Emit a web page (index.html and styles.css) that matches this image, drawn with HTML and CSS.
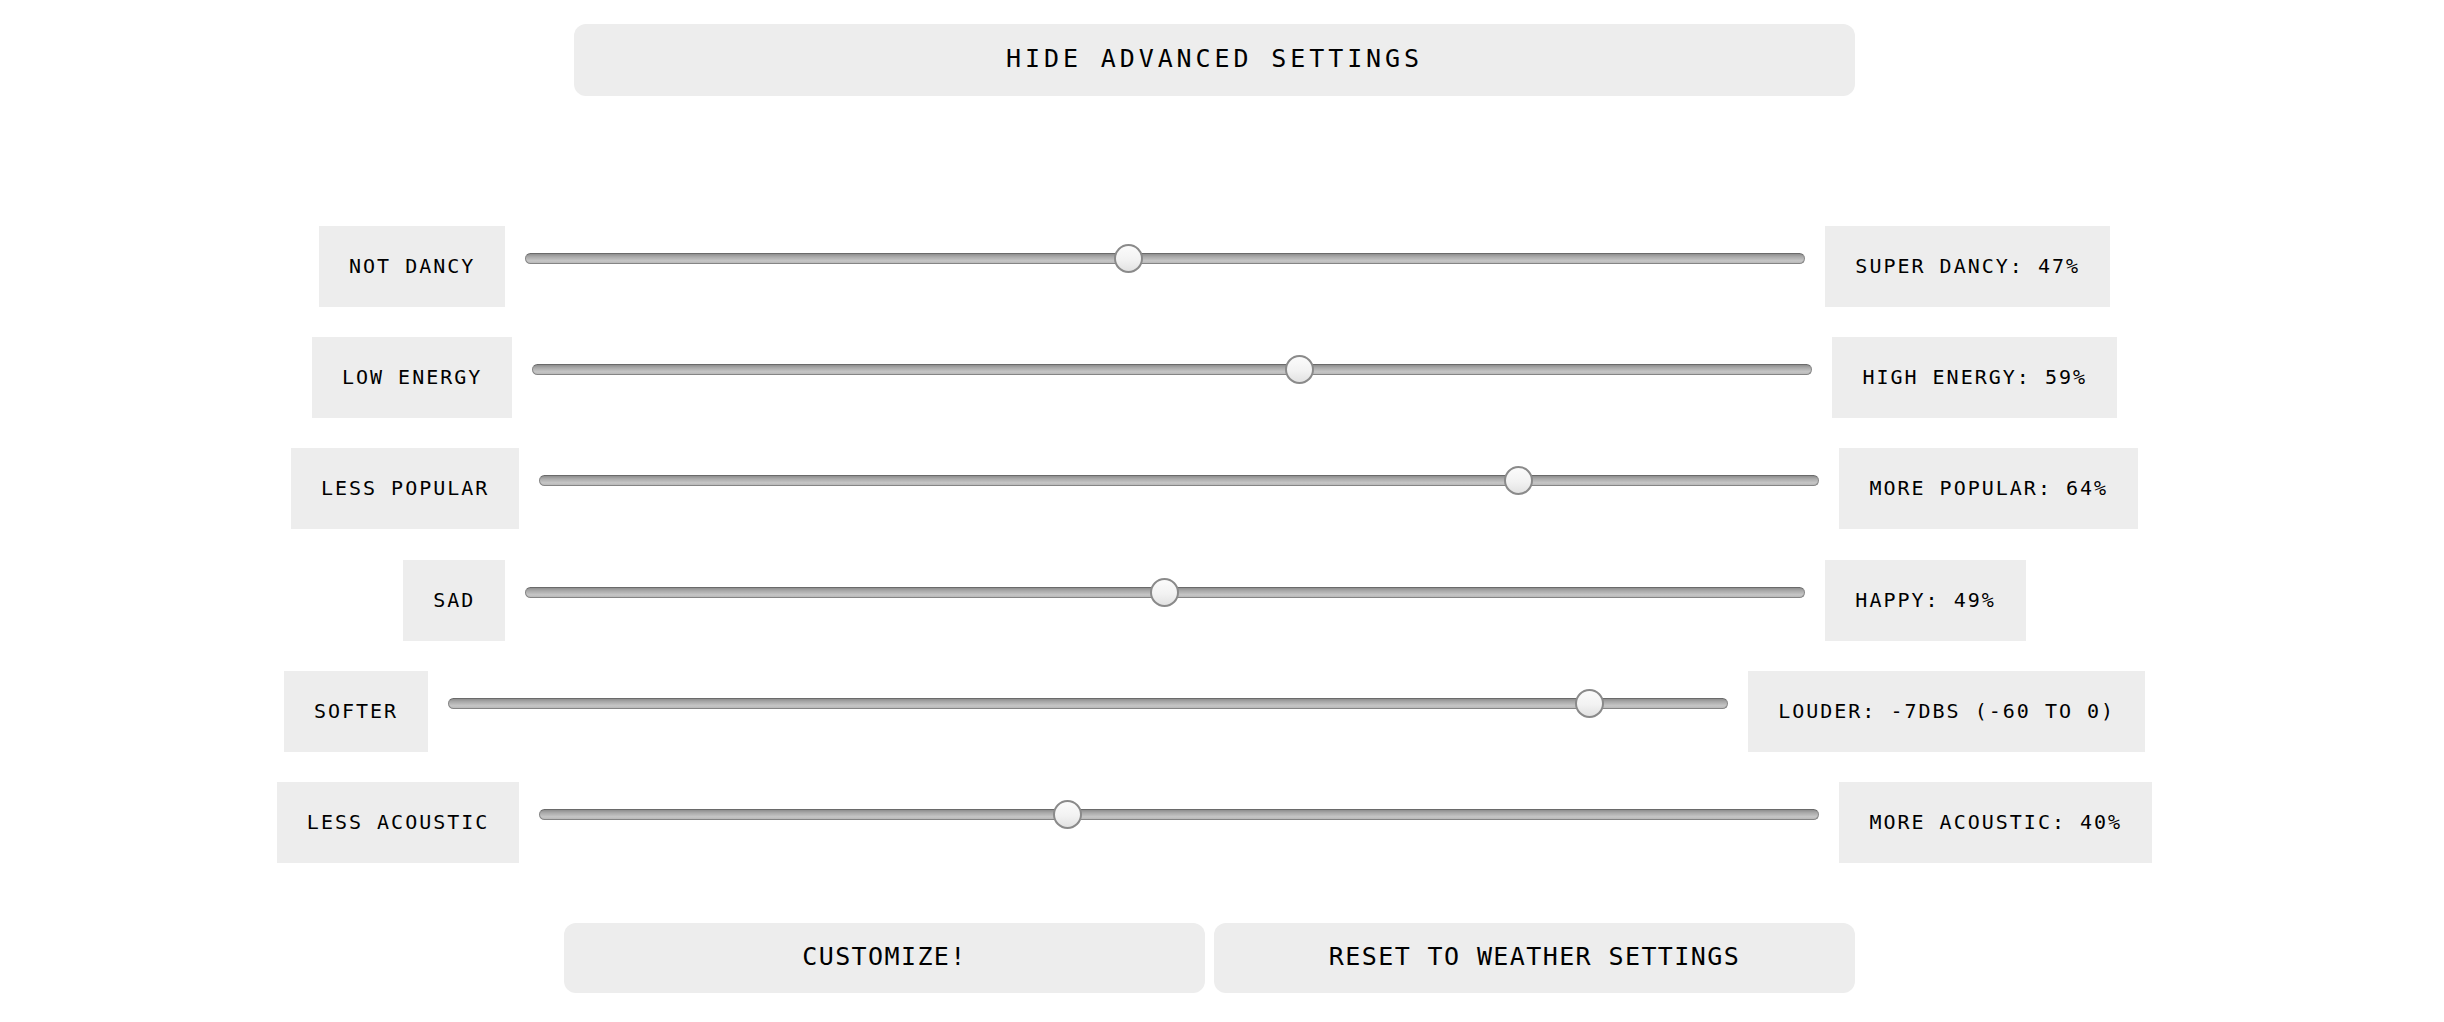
FILE: index.html
```html
<!DOCTYPE html>
<html lang="en">
<head>
<meta charset="utf-8">
<title>Advanced settings</title>
<link rel="stylesheet" href="styles.css">
</head>
<body>
<div class="page">
  <div class="panel">
    <button class="btn btn-toggle" type="button">HIDE ADVANCED SETTINGS</button>

    <div class="rows">
      <div class="row">
        <span class="tag">NOT DANCY</span>
        <input class="slider" type="range" min="0" max="100" step="any" value="47.05">
        <span class="tag">SUPER DANCY: 47%</span>
      </div>
      <div class="row">
        <span class="tag">LOW ENERGY</span>
        <input class="slider" type="range" min="0" max="100" step="any" value="60.15">
        <span class="tag">HIGH ENERGY: 59%</span>
      </div>
      <div class="row">
        <span class="tag">LESS POPULAR</span>
        <input class="slider" type="range" min="0" max="100" step="any" value="77.15">
        <span class="tag">MORE POPULAR: 64%</span>
      </div>
      <div class="row">
        <span class="tag">SAD</span>
        <input class="slider" type="range" min="0" max="100" step="any" value="49.95">
        <span class="tag">HAPPY: 49%</span>
      </div>
      <div class="row">
        <span class="tag">SOFTER</span>
        <input class="slider" type="range" min="-60" max="0" step="any" value="-5.9">
        <span class="tag">LOUDER: -7DBS (-60 TO 0)</span>
      </div>
      <div class="row">
        <span class="tag">LESS ACOUSTIC</span>
        <input class="slider" type="range" min="0" max="100" step="any" value="41.05">
        <span class="tag">MORE ACOUSTIC: 40%</span>
      </div>
    </div>

    <div class="actions">
      <button class="btn btn-action" type="button">CUSTOMIZE!</button>
      <button class="btn btn-action" type="button">RESET TO WEATHER SETTINGS</button>
    </div>
  </div>
</div>
</body>
</html>
```

FILE: styles.css
```css
html, body {
  margin: 0;
  padding: 0;
  background: #ffffff;
}

body {
  font-family: "DejaVu Sans Mono", "Liberation Mono", monospace;
  color: #000;
}

.page {
  width: 2429px;
  padding-top: 24px;
}

.panel {
  display: flex;
  flex-direction: column;
  align-items: center;
}

.btn {
  border: 0;
  margin: 0;
  padding: 0;
  background: #ededed;
  color: #000;
  font-family: "DejaVu Sans Mono", "Liberation Mono", monospace;
  font-size: 25px;
  cursor: pointer;
}

.btn-toggle {
  width: 1281px;
  height: 72px;
  border-radius: 12px;
  letter-spacing: 3.9px;
  line-height: 29px;
  padding-bottom: 4px;
}

.rows {
  margin-top: 130px;
  display: flex;
  flex-direction: column;
  align-items: center;
  gap: 30.2px;
}

.row {
  display: flex;
  align-items: flex-start;
  gap: 20px;
}

.tag {
  display: block;
  background: #ededed;
  font-size: 20px;
  line-height: 23px;
  letter-spacing: 2px;
  padding: 29px 30px;
  white-space: nowrap;
}

.slider {
  -webkit-appearance: none;
  appearance: none;
  width: 1280px;
  height: 29px;
  margin: 18px 0 0;
  padding: 0;
  background: transparent;
}

.slider::-webkit-slider-runnable-track {
  box-sizing: border-box;
  height: 11px;
  border-radius: 6px;
  border: 1px solid #858585;
  border-top-color: #6a6a6a;
  background: linear-gradient(#8e8e8e 0%, #a9a9a9 30%, #c6c6c6 75%, #b9b9b9 100%);
}

.slider::-webkit-slider-thumb {
  -webkit-appearance: none;
  appearance: none;
  box-sizing: border-box;
  width: 29px;
  height: 29px;
  border-radius: 50%;
  border: 2px solid #8a8a8a;
  background: linear-gradient(#fbfbfb 0%, #f2f2f2 55%, #e2e2e2 100%);
  margin-top: -10px;
}

.actions {
  margin-top: 60px;
  width: 1291px;
  margin-left: -10px;
  display: flex;
  gap: 9px;
}

.btn-action {
  flex: 1 1 0;
  height: 70px;
  border-radius: 12px;
  letter-spacing: 1.4px;
  line-height: 29px;
  padding-bottom: 2px;
}
```
